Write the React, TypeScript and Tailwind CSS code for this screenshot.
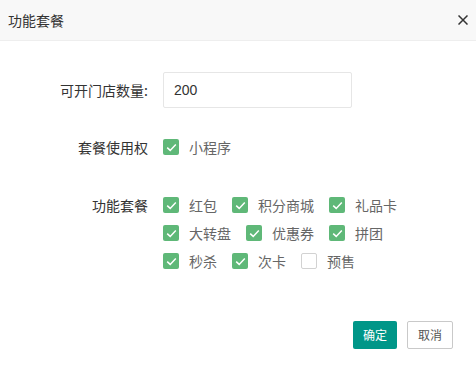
import React from "react";

const font = { fontFamily: '"Noto Sans CJK SC", "Liberation Sans", sans-serif' };

function Check({ on }: { on: boolean }) {
  return on ? (
    <span className="w-4 h-4 rounded-[2px] bg-[#5fb878] flex items-center justify-center shrink-0">
      <svg width="11" height="9" viewBox="0 0 11 9" fill="none">
        <path d="M1.2 4.6 L4.2 7.4 L9.8 1.6" stroke="#fff" strokeWidth="1.5" />
      </svg>
    </span>
  ) : (
    <span className="w-4 h-4 rounded-[2px] border border-[#d2d2d2] bg-white shrink-0" />
  );
}

function Item({ label, on }: { label: string; on: boolean }) {
  return (
    <div className="flex items-center h-7 mr-[15px]">
      <Check on={on} />
      <span className="ml-[10px] text-[14px] text-[#666]">{label}</span>
    </div>
  );
}

export default function App() {
  const items: [string, boolean][] = [
    ["红包", true],
    ["积分商城", true],
    ["礼品卡", true],
    ["大转盘", true],
    ["优惠券", true],
    ["拼团", true],
    ["秒杀", true],
    ["次卡", true],
    ["预售", false],
  ];
  return (
    <div className="w-[476px] h-[384px] bg-white" style={font}>
      <div className="h-[41px] bg-[#f8f8f8] border-b border-[#eee] flex items-center justify-between pl-2 pr-[8px]">
        <span className="text-[14px] text-[#333]">功能套餐</span>
        <svg width="10" height="10" viewBox="0 0 10 10">
          <path d="M0.5 0.5 L9.5 9.5 M9.5 0.5 L0.5 9.5" stroke="#333" strokeWidth="1.5" />
        </svg>
      </div>
      <div className="pt-[31px]">
        <div className="flex items-center h-9">
          <span className="w-[148px] text-right text-[14px] text-[#333]">可开门店数量:</span>
          <div
            className="ml-[15px] w-[189px] h-9 border border-[#e6e6e6] rounded-[2px] flex items-center pl-[10px] text-[14px] text-[#333]"
            style={{ fontFamily: '"Liberation Sans", sans-serif' }}
          >
            200
          </div>
        </div>
        <div className="flex items-center h-9 mt-[21px]">
          <span className="w-[148px] text-right text-[14px] text-[#333]">套餐使用权</span>
          <div className="ml-[15px] flex">
            <Item label="小程序" on={true} />
          </div>
        </div>
        <div className="flex mt-[26px]">
          <div className="w-[148px] h-7 flex items-center justify-end text-[14px] text-[#333]">功能套餐</div>
          <div className="ml-[15px] w-[270px] flex flex-wrap">
            {items.map(([l, o]) => (
              <Item key={l} label={l} on={o} />
            ))}
          </div>
        </div>
        <div className="flex justify-end gap-[10px] pr-[23px] mt-[46px]">
          <button className="h-7 w-[44px] rounded-[2px] bg-[#009688] text-white text-[12px]">确定</button>
          <button className="h-7 w-[46px] rounded-[2px] border border-[#c9c9c9] bg-white text-[#555] text-[12px]">取消</button>
        </div>
      </div>
    </div>
  );
}
